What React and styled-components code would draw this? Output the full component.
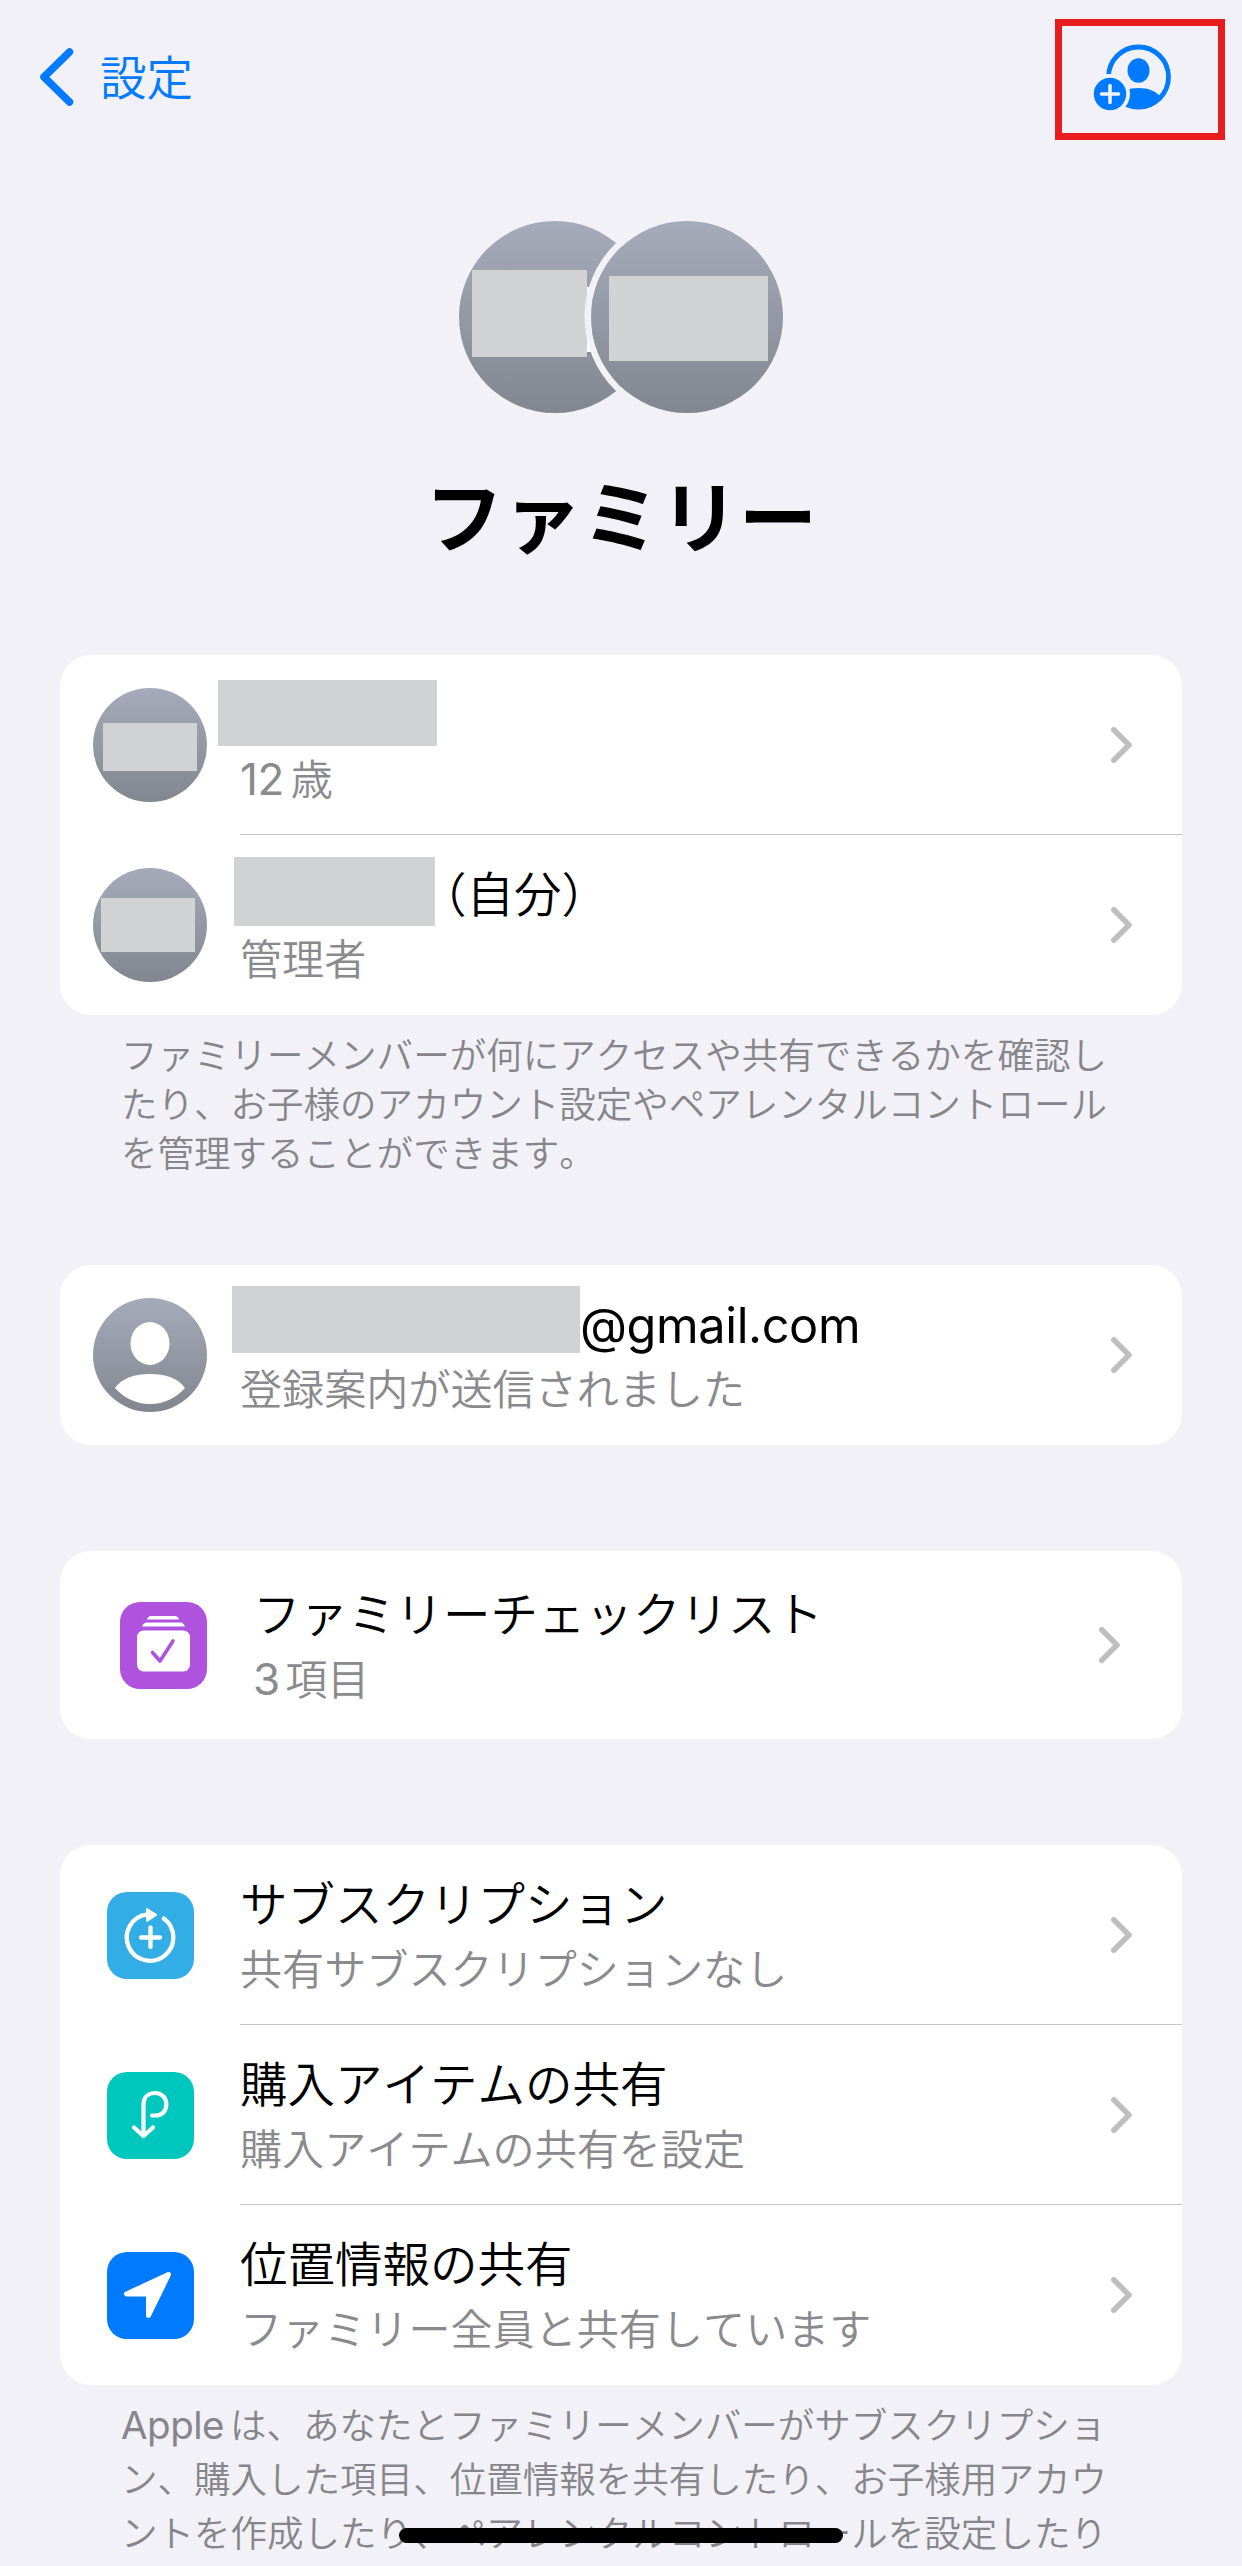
import styled, { createGlobalStyle } from "styled-components";

const GlobalStyle = createGlobalStyle`
  * {
    box-sizing: border-box;
  }
  body {
    margin: 0;
    background-color: #f2f1f7;
  }
`;

const Container = styled.div`
  width: 1242px;
  height: 2566px;
  overflow: hidden;
  position: relative;
  background-color: #f2f1f7;
  font-family: "Noto Sans CJK JP", "Inter", sans-serif;
  font-weight: 350;
  font-kerning: none;
  color: #000;
`;

const Header = styled.header`
  height: 159px;
  padding: 19px 17px 0 39px;
  display: flex;
  justify-content: space-between;
  align-items: flex-start;
`;

const Back = styled.a`
  height: 116px;
  display: flex;
  align-items: center;
  color: #007aff;
  font-size: 46.5px;
  cursor: pointer;
  svg {
    margin-right: 25px;
  }
`;

const BackLabel = styled.span`
  padding-bottom: 6px;
`;

const AddMember = styled.button`
  width: 170px;
  height: 121px;
  padding: 18px 0 0 30px;
  display: flex;
  align-items: flex-start;
  border: 7px solid #e81c1c;
  background: none;
  cursor: pointer;
`;

const Hero = styled.section`
  height: 496px;
  padding-top: 62px;
  display: flex;
  flex-direction: column;
  align-items: center;
`;

const Avatars = styled.div`
  display: flex;
`;

const Avatar = styled.div`
  flex-shrink: 0;
  display: flex;
  align-items: flex-start;
  width: ${(props) => props.$size}px;
  height: ${(props) => props.$size}px;
  border-radius: 50%;
  overflow: hidden;
  background: linear-gradient(#a5abba, #82868f);
`;

const FrontAvatar = styled(Avatar)`
  margin-left: -60px;
  box-shadow: 0 0 0 6.5px #f2f1f7;
`;

const Mask = styled.div`
  flex-shrink: 0;
  width: ${(props) => props.$w}px;
  height: ${(props) => props.$h}px;
  margin: ${(props) => props.$m || "0"};
  background-color: #d1d2d4;
`;

const InitialEdge = styled.div`
  width: 5px;
  height: 65px;
  margin-top: 66px;
  background-color: white;
`;

const Title = styled.h1`
  margin: 42px 0 0;
  font-size: 78.5px;
  line-height: 116px;
  font-weight: 700;
`;

const Card = styled.section`
  margin: 0 60px;
  padding: ${(props) => props.$pad || "0"};
  border-radius: 31px;
  background-color: white;
`;

const Row = styled.div`
  height: 180px;
  padding-left: ${(props) => props.$inset || 33}px;
  display: flex;
  align-items: center;
  cursor: pointer;
`;

const Content = styled.div`
  flex: 1;
  height: 180px;
  margin-left: ${(props) => props.$gap || 33}px;
  padding-right: 50px;
  display: flex;
  align-items: center;
  justify-content: space-between;
  border-bottom: ${(props) => (props.$line ? "1px solid #c6c6c8" : "none")};
`;

const Name = styled.div`
  height: 64px;
  display: flex;
  align-items: center;
  font-size: 47.5px;
  line-height: 62px;
  white-space: pre;
`;

const Label = styled.span`
  padding-bottom: 2px;
`;

const Detail = styled.div`
  font-size: 42.1px;
  line-height: 64px;
  color: #8a8a8e;
`;

const Latin = styled.span`
  font-family: "Inter", sans-serif;
  font-weight: 400;
  font-size: ${(props) => props.$size}px;
  letter-spacing: ${(props) => props.$track || 0}px;
  margin-right: ${(props) => props.$after || 0}px;
  line-height: 0;
`;

const Email = styled(Latin)`
  padding-top: 5px;
`;

const Note = styled.p`
  margin: 0 60px;
  height: ${(props) => props.$h}px;
  padding: ${(props) => props.$top}px 0 0 61px;
  font-size: 36.53px;
  line-height: ${(props) => props.$lh}px;
  color: #86858b;
  white-space: nowrap;
`;

const Space = styled.div`
  height: 106px;
`;

const Tile = styled.div`
  width: 87px;
  height: 87px;
  border-radius: 20px;
  background-color: ${(props) => props.$color};
  svg {
    display: block;
  }
`;

const HomeBar = styled.div`
  position: absolute;
  left: 399px;
  bottom: 23px;
  width: 444px;
  height: 15px;
  border-radius: 8px;
  background-color: #000;
`;

const Chevron = () => (
  <svg width="24" height="38" viewBox="0 0 24 38" fill="none">
    <path
      d="M5.750 3.750L21 19 5.750 34.250"
      stroke="#bfbfc1"
      strokeWidth="5.500"
      strokeLinecap="round"
      strokeLinejoin="round"
    />
  </svg>
);

const PersonAvatar = () => (
  <Avatar $size={114}>
    <svg width="114" height="114" viewBox="0 0 114 114" fill="#fff">
      <ellipse cx="57" cy="45.500" rx="19.500" ry="21.500" />
      <path d="M22 90C29 80 42 76 57 76s28 4 35 14C83 100 71 106 57 106S31 100 22 90z" />
    </svg>
  </Avatar>
);

const ChecklistIcon = () => (
  <Tile $color="#af52de">
    <svg width="87" height="87" viewBox="0 0 87 87" fill="#fff">
      <path d="M27 17.500q1-3.500 4-3.500h24q3 0 4 3.500z" />
      <path d="M22 24.500q1.500-4 5-4h33q3.500 0 5 4z" />
      <rect x="17" y="28.500" width="53" height="41" rx="6.500" />
      <path
        d="M32.500 50.500l7.500 8.500 13-20"
        fill="none"
        stroke="#af52de"
        strokeWidth="3.600"
        strokeLinecap="round"
        strokeLinejoin="round"
      />
    </svg>
  </Tile>
);

const SubscriptionIcon = () => (
  <Tile $color="#32ade6">
    <svg width="87" height="87" viewBox="0 0 87 87" fill="none" stroke="#fff" strokeWidth="4.300" strokeLinecap="round">
      <path d="M56.700 26.500A23.300 23.300 0 1 1 40 22.300" />
      <path d="M43.500 35.500v19.500M34 45.500h19" />
      <path d="M40 17l9 5.800-9 6z" fill="#fff" strokeWidth="2" strokeLinejoin="round" />
    </svg>
  </Tile>
);

const PurchaseIcon = () => (
  <Tile $color="#00c7be">
    <svg
      width="87"
      height="87"
      viewBox="0 0 87 87"
      fill="none"
      stroke="#fff"
      strokeWidth="4.200"
      strokeLinecap="round"
      strokeLinejoin="round"
    >
      <path d="M36.500 63V32.500C36.500 25 41.500 21 48 21c7 0 11.300 5 11.300 11.500S55 43.500 48.500 43.500h-3.500" />
      <path d="M27 55.500l9.500 8.500 9.500-8.500" />
    </svg>
  </Tile>
);

const LocationIcon = () => (
  <Tile $color="#007aff">
    <svg width="87" height="87" viewBox="0 0 87 87">
      <path
        d="M61.500 22.500L19.500 42H41.500V63.500z"
        fill="#fff"
        stroke="#fff"
        strokeWidth="5"
        strokeLinejoin="round"
      />
    </svg>
  </Tile>
);

const services = [
  { icon: <SubscriptionIcon />, name: "サブスクリプション", detail: "共有サブスクリプションなし" },
  { icon: <PurchaseIcon />, name: "購入アイテムの共有", detail: "購入アイテムの共有を設定" },
  { icon: <LocationIcon />, name: "位置情報の共有", detail: "ファミリー全員と共有しています" },
];

const App = () => {
  return (
    <Container>
      <GlobalStyle />
      <Header>
        <Back>
          <svg width="36" height="60" viewBox="0 0 36 60" fill="none">
            <path
              d="M30.500 5L5 30l25.500 25"
              stroke="#007aff"
              strokeWidth="7.500"
              strokeLinecap="round"
              strokeLinejoin="round"
            />
          </svg>
          <BackLabel>設定</BackLabel>
        </Back>
        <AddMember>
          <svg width="80" height="68" viewBox="0 0 80 68">
            <clipPath id="disc">
              <circle cx="46.500" cy="33" r="31" />
            </clipPath>
            <circle cx="46.500" cy="33" r="30" fill="none" stroke="#007aff" strokeWidth="4.800" />
            <ellipse cx="46.500" cy="26.500" rx="11" ry="12.200" fill="#007aff" />
            <path d="M24 53C28 47 37 44 46.500 44S65 47 69 54L60 68H30z" fill="#007aff" clipPath="url(#disc)" />
            <rect x="12" y="30" width="10" height="10" fill="#f2f1f7" />
            <circle cx="18" cy="50" r="20" fill="#f2f1f7" />
            <circle cx="18" cy="50" r="16.200" fill="#007aff" />
            <path d="M18 41.500v17M9.500 50h17" stroke="#f2f1f7" strokeWidth="3.600" strokeLinecap="round" />
          </svg>
        </AddMember>
      </Header>

      <Hero>
        <Avatars>
          <Avatar $size={192}>
            <Mask $w={115} $h={87} $m="49px 0 0 13px" />
            <InitialEdge />
          </Avatar>
          <FrontAvatar $size={192}>
            <Mask $w={159} $h={85} $m="55px 0 0 18px" />
          </FrontAvatar>
        </Avatars>
        <Title>ファミリー</Title>
      </Hero>

      <Card>
        <Row>
          <Avatar $size={114}>
            <Mask $w={94} $h={48} $m="35px 0 0 10px" />
          </Avatar>
          <Content $line>
            <div>
              <Name>
                <Mask $w={219} $h={66} $m="0 0 0 -22px" />
              </Name>
              <Detail>
                <Latin $size={44} $track={-0.5} $after={7}>12</Latin>歳
              </Detail>
            </div>
            <Chevron />
          </Content>
        </Row>
        <Row>
          <Avatar $size={114}>
            <Mask $w={94} $h={54} $m="30px 0 0 8px" />
          </Avatar>
          <Content>
            <div>
              <Name>
                <Mask $w={201} $h={69} $m="-4px -16px 0 -6px" />
                <Label>（自分）</Label>
              </Name>
              <Detail>管理者</Detail>
            </div>
            <Chevron />
          </Content>
        </Row>
      </Card>
      <Note $h={250} $top={14} $lh={49}>
        ファミリーメンバーが何にアクセスや共有できるかを確認し
        <br />
        たり、お子様のアカウント設定やペアレンタルコントロール
        <br />
        を管理することができます。
      </Note>

      <Card>
        <Row>
          <PersonAvatar />
          <Content>
            <div>
              <Name>
                <Mask $w={348} $h={67} $m="-8px 0 0 -8px" />
                <Email $size={48.7} $track={-0.4}>@gmail.com</Email>
              </Name>
              <Detail>登録案内が送信されました</Detail>
            </div>
            <Chevron />
          </Content>
        </Row>
      </Card>
      <Space />

      <Card $pad="4px 12px 4px 13px">
        <Row $inset={47}>
          <ChecklistIcon />
          <Content $gap={46}>
            <div>
              <Name>
                <Label>ファミリーチェックリスト</Label>
              </Name>
              <Detail>
                <Latin $size={44} $after={5}>3</Latin>項目
              </Detail>
            </div>
            <Chevron />
          </Content>
        </Row>
      </Card>
      <Space />

      <Card>
        {services.map((item, i) => (
          <Row key={item.name} $inset={47}>
            {item.icon}
            <Content $gap={46} $line={i < services.length - 1}>
              <div>
                <Name>
                  <Label>{item.name}</Label>
                </Name>
                <Detail>{item.detail}</Detail>
              </div>
              <Chevron />
            </Content>
          </Row>
        ))}
      </Card>
      <Note $h={181} $top={12} $lh={54}>
        <Latin $size={38.5} $track={-0.5} $after={6}>Apple</Latin>
        は、あなたとファミリーメンバーがサブスクリプショ
        <br />
        ン、購入した項目、位置情報を共有したり、お子様用アカウ
        <br />
        ントを作成したり、ペアレンタルコントロールを設定したり
      </Note>
      <HomeBar />
    </Container>
  );
};

export default App;
